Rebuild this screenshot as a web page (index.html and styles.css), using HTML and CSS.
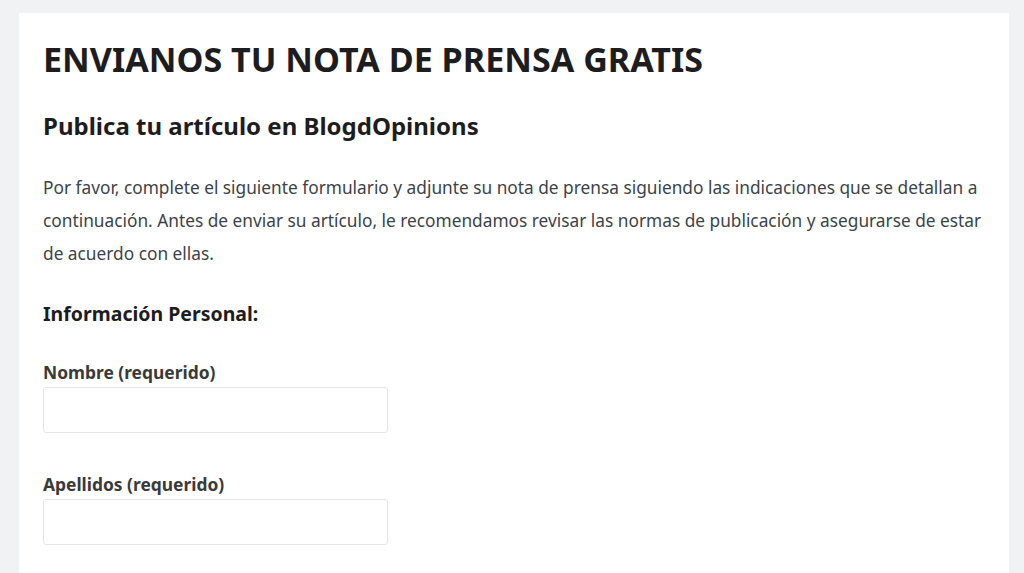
FILE: index.html
```html
<!DOCTYPE html>
<html lang="es">
<head>
<meta charset="utf-8">
<link rel="stylesheet" href="styles.css">
</head>
<body>
<main class="card">
  <h1 class="title">ENVIANOS TU NOTA DE PRENSA GRATIS</h1>
  <h2 class="subtitle">Publica tu artículo en BlogdOpinions</h2>
  <p class="intro">Por favor, complete el siguiente formulario y adjunte su nota de prensa siguiendo las indicaciones que se detallan a continuación. Antes de enviar su artículo, le recomendamos revisar las normas de publicación y asegurarse de estar de acuerdo con ellas.</p>
  <h3 class="section">Información Personal:</h3>
  <form class="form">
    <div class="field">
      <label class="label" for="nombre">Nombre (requerido)</label>
      <input class="input" id="nombre" type="text">
    </div>
    <div class="field">
      <label class="label" for="apellidos">Apellidos (requerido)</label>
      <input class="input" id="apellidos" type="text">
    </div>
  </form>
</main>
</body>
</html>
```
FILE: styles.css
```css
html, body {
  margin: 0;
  padding: 0;
  background: #f1f2f3;
  height: 100%;
  overflow: hidden;
}
body {
  padding: 13px 15px 0 19px;
  box-sizing: border-box;
  font-family: "Noto Sans", "Open Sans", sans-serif;
}
.card {
  background: #fff;
  padding: 22px 24px 40px;
  min-height: 600px;
}
.title {
  margin: 0;
  font-size: 34.1px;
  font-weight: 700;
  color: #1d1d1f;
  line-height: 48px;
}
.subtitle {
  margin: 26px 0 0;
  font-size: 24px;
  font-weight: 700;
  color: #1d1d1f;
  line-height: 34px;
}
.intro {
  margin: 28px 0 0;
  font-size: 17.3px;
  line-height: 33px;
  color: #3c434a;
}
.section {
  margin: 30px 0 0;
  font-size: 19.5px;
  font-weight: 700;
  color: #1d1d1f;
  line-height: 28px;
}
.form {
  display: flex;
  flex-direction: column;
  gap: 40px;
  margin-top: 33px;
}
.field {
  display: flex;
  flex-direction: column;
  gap: 3px;
}
.label {
  font-size: 17.4px;
  font-weight: 700;
  color: #3a3a3a;
  line-height: 23px;
}
.input {
  width: 345px;
  height: 46px;
  box-sizing: border-box;
  border: 1px solid #e4e4e4;
  border-radius: 3px;
  background: #fff;
  margin: 0;
}
```
